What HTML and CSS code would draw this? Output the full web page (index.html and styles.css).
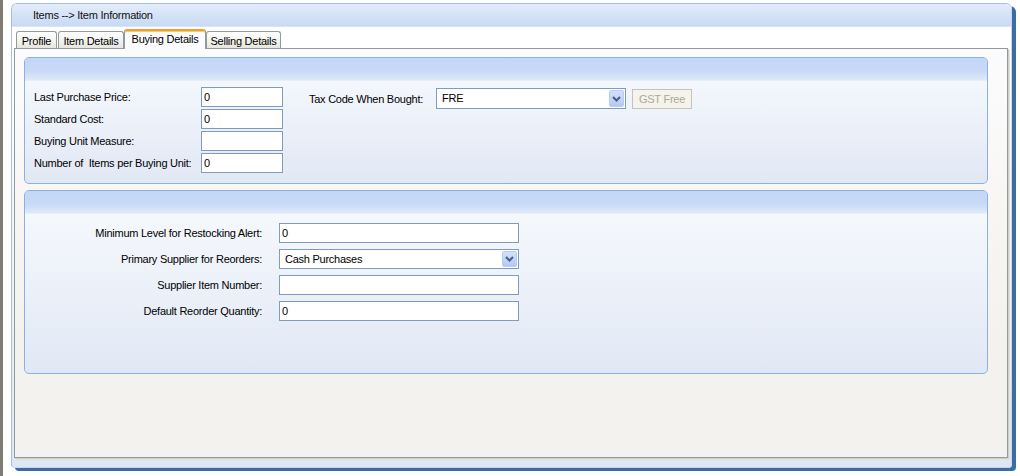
FILE: index.html
```html
<!DOCTYPE html>
<html>
<head>
<meta charset="utf-8">
<title>Item Information</title>
<link rel="stylesheet" href="styles.css">
</head>
<body>
<div class="desktop">
  <div class="window">
    <div class="win-title">Items --&gt; Item Information</div>
    <div class="win-body">
      <div class="tabs">
        <div class="tab t-profile">Profile</div>
        <div class="tab t-item">Item Details</div>
        <div class="tab tab-active t-buying">Buying Details</div>
        <div class="tab t-selling">Selling Details</div>
      </div>
      <div class="tab-page">
        <section class="panel panel-a">
          <div class="panel-head"></div>
          <div class="panel-body body-a">
            <div class="grid-left">
              <span class="lbl">Last Purchase Price:</span><div class="input w82">0</div>
              <span class="lbl">Standard Cost:</span><div class="input w82">0</div>
              <span class="lbl">Buying Unit Measure:</span><div class="input w82"></div>
              <span class="lbl">Number of&nbsp; Items per Buying Unit:</span><div class="input w82">0</div>
            </div>
            <div class="tax-row">
              <span class="lbl tax-lbl">Tax Code When Bought:</span>
              <div class="select tax-select">
                <span class="sel-text">FRE</span>
                <span class="dd"><svg width="9" height="6" viewBox="0 0 9 6"><polyline points="1,1 4.5,4.5 8,1" fill="none" stroke="#4a5d86" stroke-width="2"/></svg></span>
              </div>
              <div class="gst">GST Free</div>
            </div>
          </div>
        </section>
        <section class="panel panel-b">
          <div class="panel-head"></div>
          <div class="panel-body body-b">
            <span class="lbl r">Minimum Level for Restocking Alert:</span><div class="input w240">0</div>
            <span class="lbl r">Primary Supplier for Reorders:</span>
            <div class="select w240">
              <span class="sel-text">Cash Purchases</span>
              <span class="dd"><svg width="9" height="6" viewBox="0 0 9 6"><polyline points="1,1 4.5,4.5 8,1" fill="none" stroke="#4a5d86" stroke-width="2"/></svg></span>
            </div>
            <span class="lbl r">Supplier Item Number:</span><div class="input w240"></div>
            <span class="lbl r">Default Reorder Quantity:</span><div class="input w240">0</div>
          </div>
        </section>
      </div>
    </div>
  </div>
</div>
</body>
</html>
```
FILE: styles.css
```css
* { box-sizing: border-box; }
html, body { margin: 0; padding: 0; }
body {
  background: #ffffff;
  font-family: "Liberation Sans", Arial, sans-serif;
  font-size: 11px;
  letter-spacing: -0.25px;
  color: #000;
  width: 1020px;
  height: 476px;
  overflow: hidden;
}
.desktop {
  height: 476px;
  border-left: 3px solid #7e7c72;
  padding: 3px 0 0 8px;
}
.window {
  width: 1001px;
  height: 465px;
  border: 1px solid #a8bee2;
  border-right-color: #c8d7ef;
  border-bottom-color: #c8d7ef;
  border-radius: 6px 6px 4px 4px;
  box-shadow: 4px 3px 0 #3b6ca3;
  background: linear-gradient(#ffffff 0%, #ffffff 12%, #dfe7f6 100%);
  display: flex;
  flex-direction: column;
}
.win-title {
  flex: none;
  height: 23px;
  line-height: 22px;
  padding-left: 21px;
  color: #111;
  background: linear-gradient(#e4ecfa 0%, #d4e2f7 55%, #c9daf5 100%);
  border-bottom: 1px solid #d9e5f8;
  border-radius: 5px 5px 0 0;
}
.win-body {
  flex: 1;
  padding: 0 3px 0 2px;
}
.tabs {
  height: 21px;
  display: flex;
  align-items: flex-end;
  padding-left: 2px;
}
.tab {
  height: 17px;
  border: 1px solid #919b9c;
  border-bottom: none;
  border-radius: 3px 3px 0 0;
  background: linear-gradient(#ffffff 0%, #f4f4f0 50%, #e6e5de 100%);
  text-align: center;
  padding-top: 3px;
  line-height: 13px;
  color: #000;
  white-space: nowrap;
}
.t-profile { width: 41px; margin-right: 1px; }
.t-item { width: 66px; }
.t-buying { width: 82px; }
.t-selling { width: 75px; }
.tab-active {
  height: 20px;
  margin-bottom: -1px;
  position: relative;
  z-index: 1;
  background: #fcfcfe;
  border-top: 2px solid #e8a03a;
  box-shadow: inset 0 1px 0 #ffc95a;
  padding-top: 2px;
}
.tab-page {
  width: 994px;
  height: 410px;
  border: 1px solid #919b9c;
  box-shadow: 1px 1px 0 #d3d0c2, 2px 2px 0 #e4e2d8;
  background: linear-gradient(#fcfcfe 0%, #f7f6f3 40%, #f3f2ee 70%);
  padding: 8px 0 0 9px;
}
.panel {
  width: 964px;
  border: 1px solid #8cb0e4;
  border-radius: 5px;
  background: linear-gradient(#f8fafd 0%, #e1e8f5 100%);
  overflow: hidden;
  display: flex;
  flex-direction: column;
}
.panel-a { height: 127px; }
.panel-b { height: 184px; margin-top: 6px; }
.panel-head {
  flex: none;
  height: 23px;
  background: linear-gradient(#c3d6f5 0%, #c9daf6 60%, #d6e4f8 85%, #dfe9f9 100%);
  border-bottom: 1px solid #e6eefb;
}
.lbl { white-space: nowrap; color: #000; }
.lbl.r { text-align: right; }
.input, .select {
  height: 20px;
  border: 1px solid #7f9db9;
  background: #fff;
  line-height: 18px;
  padding-left: 2px;
  white-space: nowrap;
}
.select {
  display: flex;
  padding: 1px 1px 1px 5px;
  line-height: 16px;
}
.sel-text { flex: 1; }
.dd {
  flex: none;
  width: 15px;
  border: 1px solid #b9cdf4;
  border-radius: 2px;
  background: linear-gradient(#d2e0fb 0%, #c1d3f7 60%, #b4c8f3 100%);
  display: flex;
  align-items: center;
  justify-content: center;
}
.w82 { width: 82px; }
.w240 { width: 240px; }
.body-a {
  display: flex;
  align-items: flex-start;
  padding: 6px 0 0 9px;
}
.grid-left {
  display: grid;
  grid-template-columns: 167px 82px;
  grid-auto-rows: 20px;
  row-gap: 2px;
  align-items: center;
}
.grid-left .input:nth-of-type(3), .grid-left .input:nth-of-type(4) { transform: none; }
.tax-row {
  display: flex;
  align-items: center;
  margin-left: 26px;
  margin-top: 1px;
  height: 21px;
}
.tax-lbl { width: 127px; }
.tax-select { width: 190px; height: 21px; }
.gst {
  width: 60px;
  height: 20px;
  margin-left: 6px;
  border: 1px solid #c6c3b4;
  background: #f4f3ec;
  color: #aca899;
  text-align: center;
  line-height: 18px;
}
.body-b {
  display: grid;
  grid-template-columns: 237px 240px;
  column-gap: 17px;
  grid-auto-rows: 20px;
  row-gap: 6px;
  align-items: center;
  padding-top: 9px;
}
```
